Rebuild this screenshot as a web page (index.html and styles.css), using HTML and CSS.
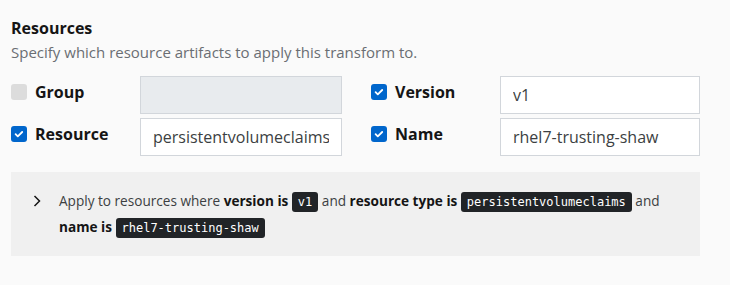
FILE: index.html
```html
<!DOCTYPE html>
<html lang="en">

<head>
  <meta charset="UTF-8" />
  <title>Resources</title>
  <link rel="stylesheet" href="styles.css">
</head>

<body>
  <div class="section">
    <h3 class="title">Resources</h3>
    <p class="desc">Specify which resource artifacts to apply this transform to.</p>

    <div class="fields">
      <div class="field">
        <label class="check-label">
          <span class="check"></span>
          <span>Group</span>
        </label>
        <input class="text-input" type="text" disabled />
      </div>
      <div class="field">
        <label class="check-label">
          <span class="check checked">
            <svg viewBox="0 0 16 16" width="16" height="16"><path d="M4.6 8.2l2.2 2.2 4.4-4.4" /></svg>
          </span>
          <span>Version</span>
        </label>
        <input class="text-input" type="text" value="v1" />
      </div>
      <div class="field">
        <label class="check-label">
          <span class="check checked">
            <svg viewBox="0 0 16 16" width="16" height="16"><path d="M4.6 8.2l2.2 2.2 4.4-4.4" /></svg>
          </span>
          <span>Resource</span>
        </label>
        <input class="text-input" type="text" value="persistentvolumeclaims" />
      </div>
      <div class="field">
        <label class="check-label">
          <span class="check checked">
            <svg viewBox="0 0 16 16" width="16" height="16"><path d="M4.6 8.2l2.2 2.2 4.4-4.4" /></svg>
          </span>
          <span>Name</span>
        </label>
        <input class="text-input" type="text" value="rhel7-trusting-shaw" />
      </div>
    </div>

    <div class="summary">
      <svg class="chevron" viewBox="0 0 8 12" width="8" height="12"><path d="M1.5 1l5 5-5 5" /></svg>
      <p>
        Apply to resources where <b>version is</b> <code>v1</code> and <b>resource type is</b>
        <code>persistentvolumeclaims</code> and <b>name is</b> <code>rhel7-trusting-shaw</code>
      </p>
    </div>
  </div>
</body>

</html>
```

FILE: styles.css
```css
* {
  box-sizing: border-box;
}

body {
  margin: 0;
  background: #fafafa;
  font-family: 'Open Sans', 'Noto Sans', sans-serif;
  color: #151515;
}

.section {
  padding: 16px 30px 0 11px;
}

.title {
  margin: 0;
  font-size: 16px;
  font-weight: 700;
  line-height: 24px;
}

.desc {
  margin: 0 0 12px;
  font-size: 15px;
  line-height: 24px;
  color: #6a6e73;
}

.fields {
  display: grid;
  grid-template-columns: 331px 329px;
  column-gap: 29px;
  row-gap: 4px;
}

.field {
  display: flex;
}

.check-label {
  display: flex;
  flex: none;
  align-items: center;
  gap: 8px;
  width: 129px;
  height: 32px;
  font-size: 16px;
  font-weight: 700;
}

.check {
  width: 16px;
  height: 16px;
  border-radius: 3px;
  background: #dcdcdc;
  flex: none;
}

.check.checked {
  background: #0066cc;
}

.check svg {
  display: block;
  fill: none;
  stroke: white;
  stroke-width: 1.8;
  stroke-linecap: round;
  stroke-linejoin: round;
}

.text-input {
  flex: 1;
  min-width: 0;
  height: 38px;
  padding: 0 12px;
  border: 1px solid #d2d6db;
  background: white;
  font-family: inherit;
  font-size: 16px;
  color: #3c3f42;
  outline: none;
}

.text-input:disabled {
  background: #e8ebee;
}

.summary {
  display: flex;
  align-items: flex-start;
  margin-top: 16px;
  padding: 16px 20px 16px 22px;
  background: #f0f0f0;
}

.chevron {
  flex: none;
  margin-top: 7px;
  fill: none;
  stroke: #151515;
  stroke-width: 1.5;
}

.summary p {
  margin: 0 0 0 18px;
  font-size: 13.6px;
  line-height: 26px;
  color: #3c3f42;
}

.summary b {
  color: #151515;
}

code {
  display: inline-block;
  padding: 0 6px;
  border-radius: 3px;
  background: #212427;
  color: white;
  font-family: 'DejaVu Sans Mono', monospace;
  font-size: 12px;
  line-height: 20px;
}
```
